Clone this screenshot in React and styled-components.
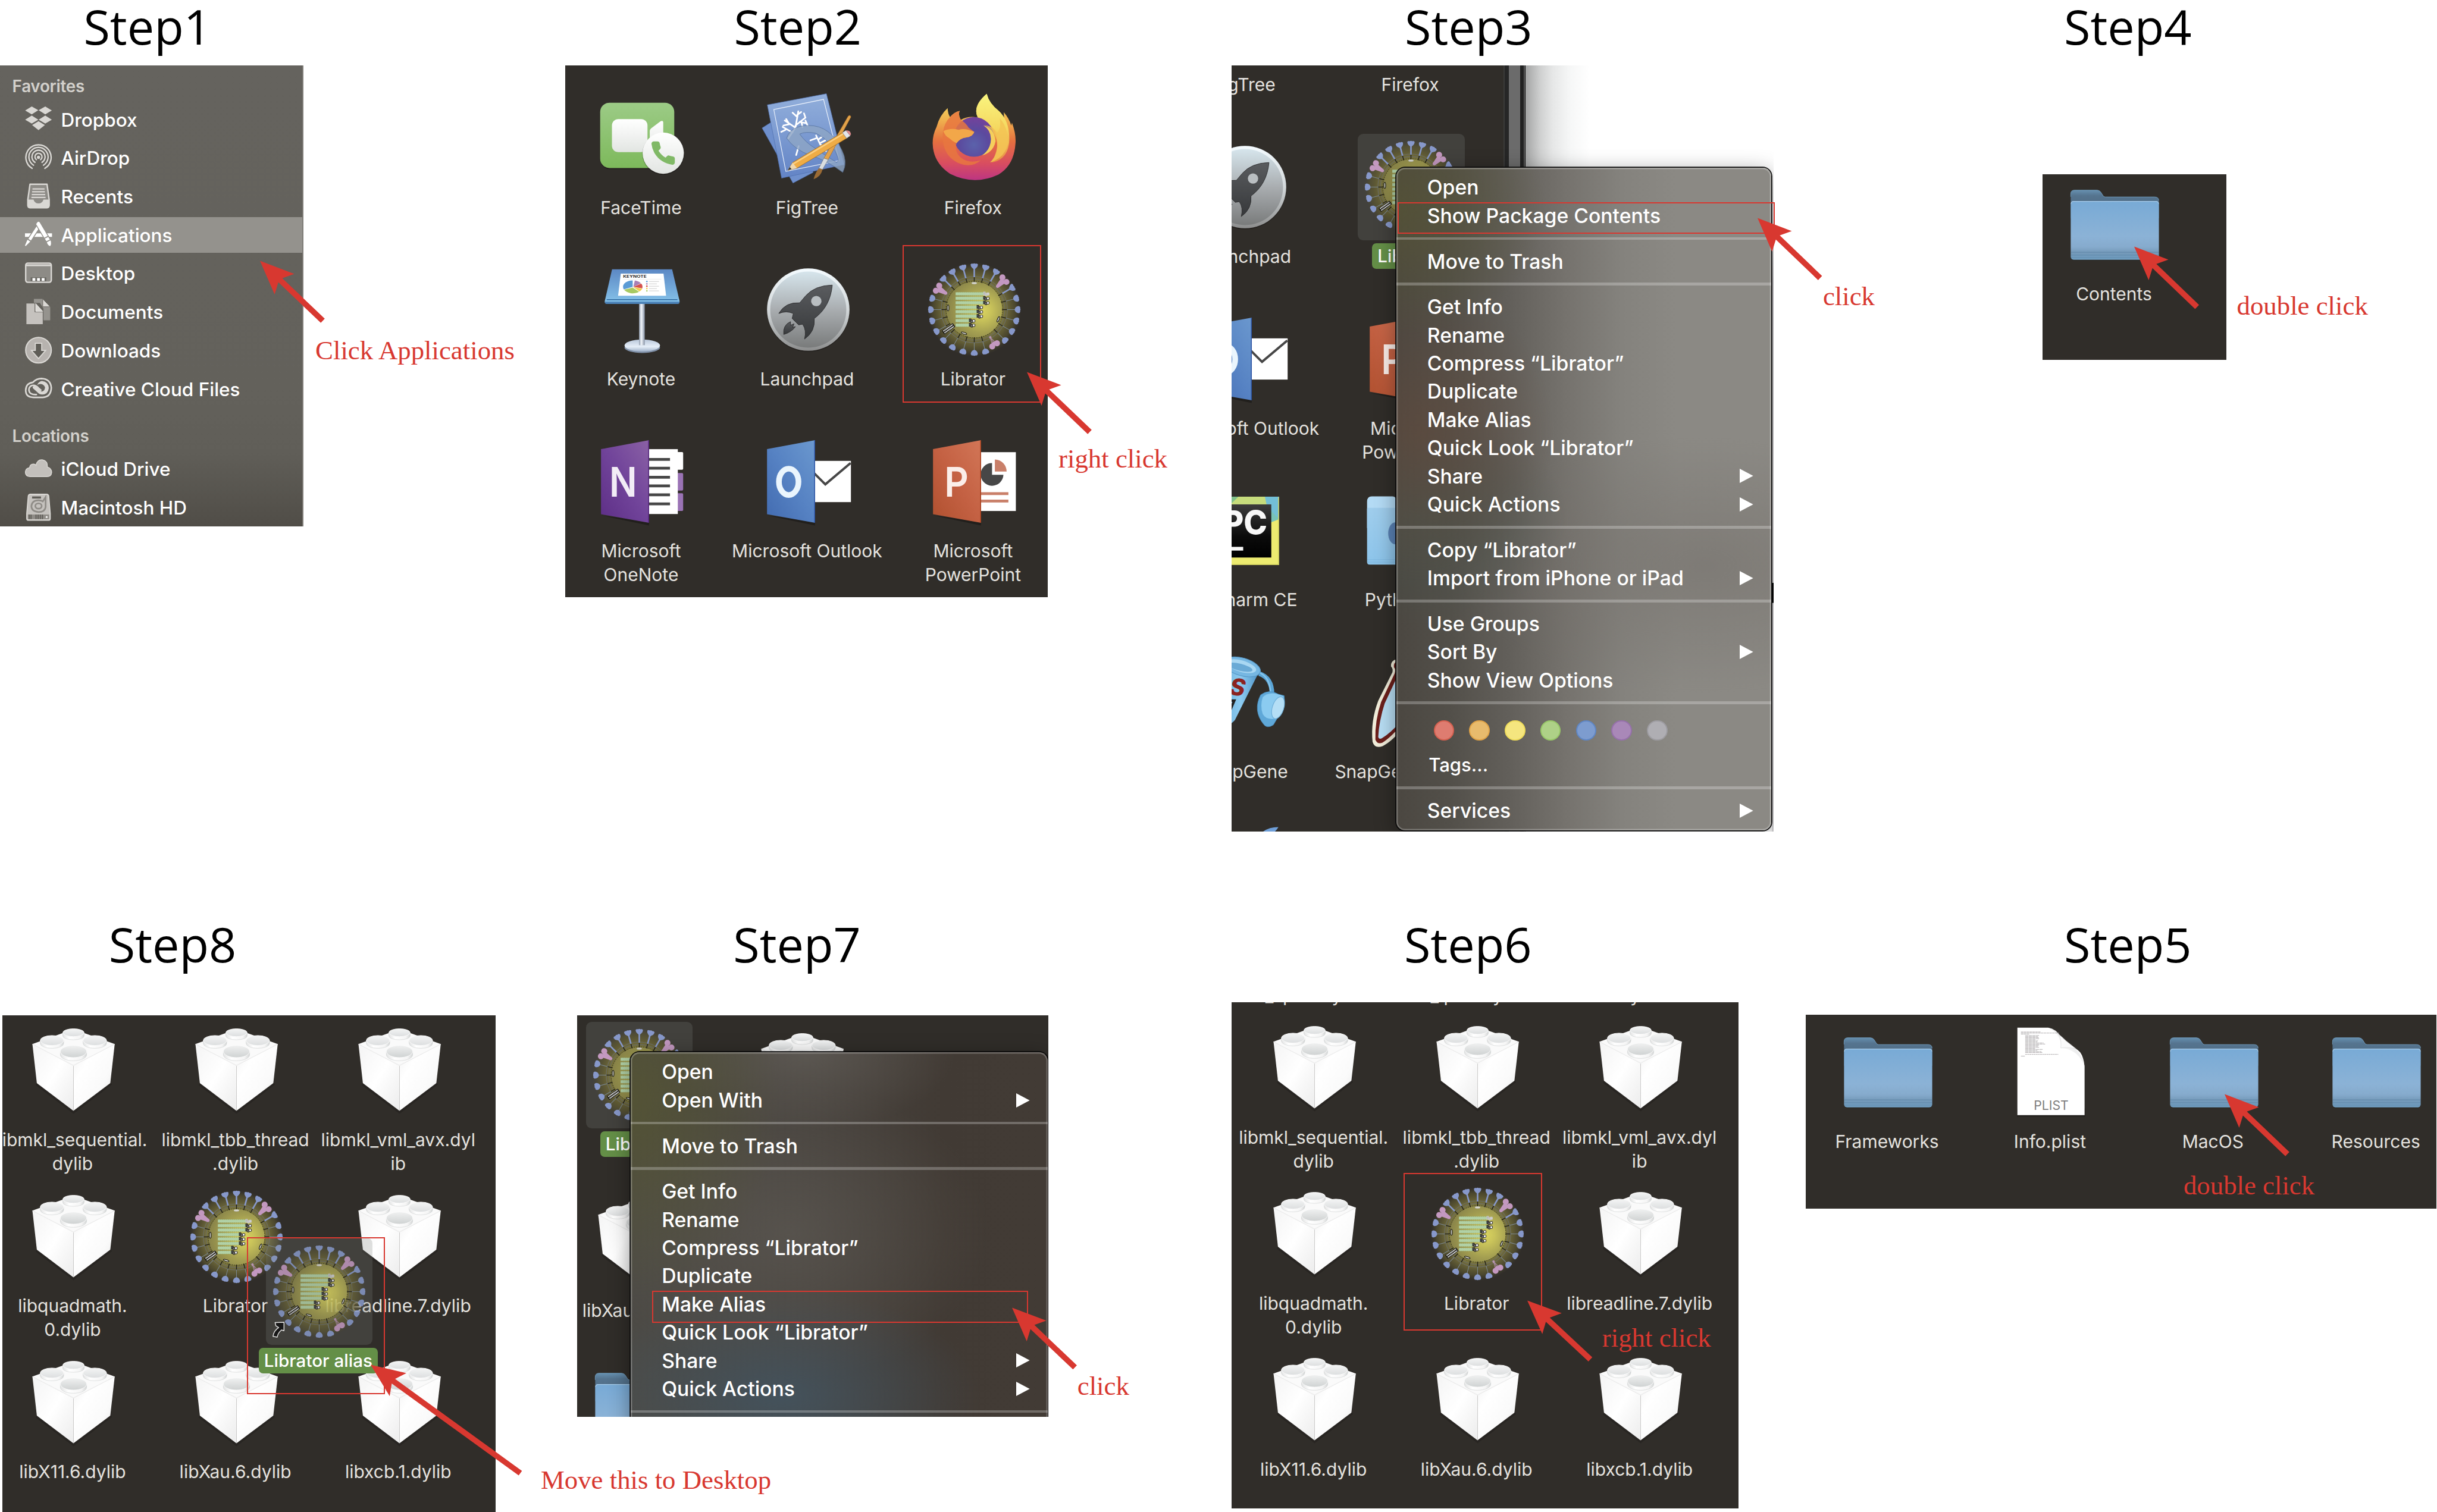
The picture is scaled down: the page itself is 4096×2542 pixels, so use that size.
import React from "react";
import styled, { createGlobalStyle, css } from "styled-components";

/* All measures are written in artboard units; u() turns them into CSS pixels. */
const SCALE = 4096 / 6854;
const u = (n) => `${(n * SCALE).toFixed(2)}px`;

const RED = "#d83830";
const SANS = `Inter, "Liberation Sans", sans-serif`;

const GlobalStyle = createGlobalStyle`
  * { box-sizing: border-box; }
  html, body { margin: 0; padding: 0; background: #fff; }
`;

/* ---------- page skeleton ---------- */

const Page = styled.main`
  position: relative;
  width: 4096px;
  height: 2542px;
  overflow: hidden;
  background: #fff;
  display: grid;
  grid-template-rows: ${u(2582)} 1fr;
`;

const StepRow = styled.section`
  display: grid;
  grid-template-columns: ${(p) => p.$cols.map(u).join(" ")} 1fr;
  align-items: start;
  min-height: 0;
`;

const StepColumn = styled.div`
  display: flex;
  flex-direction: column;
  align-items: flex-start;
  min-width: 0;
  padding-top: ${u(5)};
`;

const StepTitle = styled.h2`
  margin: 0 0 ${(p) => u(p.$gap)} ${(p) => u(p.$indent)};
  font: 400 ${u(135.5)} / 1 "Open Sans", "Noto Sans", sans-serif;
  color: #000;
  white-space: nowrap;
`;

const Panel = styled.div`
  position: relative;
  display: flex;
  align-items: flex-start;
  overflow: hidden;
  width: ${(p) => u(p.$w)};
  height: ${(p) => u(p.$h)};
  margin-left: ${(p) => u(p.$ml || 0)};
  background: #302d29;
`;

/* ---------- Finder sidebar ---------- */

const Sidebar = styled.nav`
  width: ${u(854)};
  height: ${u(1296)};
  padding-top: ${u(19.5)};
  border-right: ${u(4)} solid #7f7c77;
  background: linear-gradient(#65635e 0, #63615b 70%, #605e58 84%, #504d47 100%);
  font-family: ${SANS};
`;

const SidebarHeading = styled.div`
  height: ${u(79)};
  margin-top: ${(p) => u(p.$top)};
  padding-left: ${u(34.5)};
  line-height: ${u(79)};
  font-size: ${u(46.6)};
  font-weight: 600;
  letter-spacing: ${u(-0.5)};
  color: #d2d0cb;
`;

const SidebarRow = styled.div`
  height: ${u(108.3)};
  padding: ${u(3.4)} 0 ${u(5.4)};
`;

const SidebarItem = styled.div`
  display: flex;
  align-items: center;
  gap: ${u(25)};
  height: 100%;
  padding-left: ${u(70.5)};
  font-size: ${u(52.7)};
  font-weight: 500;
  color: #fff;
  white-space: nowrap;
  background: ${(p) => (p.$active ? "#94928d" : "transparent")};
  svg { width: ${u(76)}; height: ${u(76)}; flex: none; overflow: visible; }
`;

/* ---------- icon grid ---------- */

const IconGrid = styled.div`
  flex: none;
  display: grid;
  grid-template-columns: repeat(${(p) => p.$cols}, ${(p) => u(p.$cw)});
  grid-auto-rows: ${(p) => u(p.$rh)};
  margin: ${(p) => u(p.$y)} 0 0 ${(p) => u(p.$x)};
`;

const Cell = styled.div`
  display: flex;
  flex-direction: column;
  align-items: center;
  width: ${(p) => (p.$w ? u(p.$w) : "auto")};
`;

const IconFrame = styled.div`
  flex: none;
  width: ${u(300)};
  height: ${u(300)};
  margin: ${u(-22)} 0 ${u(-22)} ${u(6)};
  padding: ${u(22)};
  border-radius: ${u(16)};
  background: ${(p) => (p.$selected ? "rgba(125,130,125,.24)" : "transparent")};
  svg {
    display: block;
    width: 100%;
    height: 100%;
    overflow: visible;
    opacity: ${(p) => (p.$ghost ? 0.84 : 1)};
  }
`;

const Label = styled.div`
  margin-top: ${u(33)};
  font: 400 ${u(50.2)} / ${u(67)} ${SANS};
  color: #e4e2df;
  text-align: center;
  white-space: nowrap;
`;

const LabelLine = styled.div`
  height: ${u(67)};
  ${(p) =>
    p.$selected &&
    css`
      height: ${u(71)};
      line-height: ${u(71)};
      margin-top: ${u(-2)};
      padding: 0 ${u(15)};
      border-radius: ${u(12)};
      background: #648f47;
      color: #fff;
      font-weight: 500;
      font-size: ${u(49.6)};
    `}
`;

const DragItem = styled.div`
  position: absolute;
  left: ${u(660)};
  top: ${u(648)};
`;

/* ---------- context menu ---------- */

const Menu = styled.div`
  position: absolute;
  left: ${(p) => u(p.$x)};
  top: ${(p) => u(p.$y)};
  width: ${(p) => u(p.$w)};
  height: ${(p) => u(p.$h)};
  padding-top: ${u(16)};
  border-radius: ${u(24)};
  background: ${(p) => p.$bg};
  box-shadow: inset 0 0 0 ${u(4)} rgba(255, 255, 255, 0.24), 0 0 0 ${u(3)} #0b0b0b,
    0 ${u(14)} ${u(60)} rgba(0, 0, 0, 0.42);
  font: 500 ${u(56.4)} / ${u(79.35)} ${SANS};
  color: #fff;
  white-space: nowrap;
`;

const MenuItem = styled.div`
  display: flex;
  align-items: center;
  justify-content: space-between;
  height: ${u(79.35)};
  padding: 0 ${u(51)} 0 ${u(87)};
  svg { width: ${u(38)}; height: ${u(40)}; }
`;

const MenuRule = styled.div`
  height: ${u(8)};
  margin: ${u(20.5)} 0;
  background: rgba(255, 255, 255, 0.25);
`;

const TagDots = styled.div`
  display: flex;
  align-items: center;
  gap: ${u(42)};
  height: ${u(106)};
  padding-left: ${u(105)};
`;

const TagDot = styled.span`
  width: ${u(58)};
  height: ${u(58)};
  border-radius: 50%;
  border: ${u(4)} solid ${(p) => p.$edge};
  background: ${(p) => p.$fill};
`;

const TagsItem = styled.div`
  height: ${u(84.5)};
  padding: ${u(4)} 0 0 ${u(91)};
  line-height: ${u(80.5)};
  font-size: ${u(52)};
`;

/* ---------- step 3 window pieces ---------- */

const FinderArea = styled.div`
  flex: none;
  display: flex;
  align-items: flex-start;
  width: ${u(765)};
  height: 100%;
  overflow: hidden;
  background: #302d29;
`;

const WindowEdge = styled.div`
  flex: none;
  width: ${u(62)};
  height: 100%;
  background: linear-gradient(
    90deg,
    #3a3a39 0 5%, #262626 5% 23%, #6b6b6b 23% 77%, #222 77% 92%, #5c5c5c 92% 97%, #000 97%
  );
`;

const Backdrop = styled.div`
  flex: 1;
  height: 100%;
  background: linear-gradient(90deg, #a3a4a4 0, #cfd0d0 6%, #e6e7e7 11%, #f6f7f7 18%, #fff 26%);
`;

const RightSliver = styled.div`
  position: absolute;
  right: 0;
  top: ${u(400)};
  bottom: 0;
  width: ${u(6)};
  background: linear-gradient(
    rgba(215, 215, 215, 0) 0, #cfcdd1 12%, #dcdbdd 50%, #d9d8da 60.1%, #000 60.2% 63.3%, #dcdbdd 63.4%
  );
`;

/* ---------- annotations ---------- */

const Annotations = styled.div`
  position: absolute;
  inset: 0;
  pointer-events: none;
`;

const Callout = styled.span`
  position: absolute;
  left: ${(p) => u(p.$x)};
  top: ${(p) => u(p.$base - 62.8)};
  font: 400 ${u(75)} / 1 "Liberation Serif", "Times New Roman", serif;
  color: ${RED};
  white-space: nowrap;
`;

const Outline = styled.span`
  position: absolute;
  left: ${(p) => u(p.$x)};
  top: ${(p) => u(p.$y)};
  width: ${(p) => u(p.$w)};
  height: ${(p) => u(p.$h)};
  border: ${u(4.2)} solid ${RED};
`;

const ArrowSvg = styled.svg`
  position: absolute;
  left: ${(p) => u(p.$x)};
  top: ${(p) => u(p.$y)};
  width: ${(p) => u(p.$len)};
  height: ${u(82)};
  margin-top: ${u(-41)};
  transform-origin: 0 50%;
  transform: rotate(${(p) => p.$deg}deg);
`;

function Arrow({ tip, tail }) {
  const dx = tail[0] - tip[0];
  const dy = tail[1] - tip[1];
  const len = Math.hypot(dx, dy);
  const deg = (Math.atan2(dy, dx) * 180) / Math.PI;
  return (
    <ArrowSvg $x={tip[0]} $y={tip[1]} $len={len} $deg={deg.toFixed(2)} viewBox={`0 -41 ${len} 82`}>
      <path d={`M0 0 L95 40 L79 8 L${len} 8 L${len} -8 L79 -8 L95 -40 Z`} fill={RED} />
    </ArrowSvg>
  );
}

/* ---------- shared gradients ---------- */

const DefsSvg = styled.svg`
  position: absolute;
  width: 0;
  height: 0;
`;

const Lin = ({ id, stops, v = [0, 0, 0, 1] }) => (
  <linearGradient id={id} x1={v[0]} y1={v[1]} x2={v[2]} y2={v[3]}>
    {stops.map(([o, c]) => <stop key={o} offset={o} stopColor={c} />)}
  </linearGradient>
);

const Defs = () => (
  <DefsSvg aria-hidden="true">
    <defs>
      <radialGradient id="glow">
        <stop offset="0" stopColor="#8d8845" />
        <stop offset=".6" stopColor="#7d783f" />
        <stop offset=".74" stopColor="#625d36" />
        <stop offset=".88" stopColor="#5a5530" stopOpacity=".62" />
        <stop offset="1" stopColor="#4a4630" stopOpacity="0" />
      </radialGradient>
      <radialGradient id="core" cx=".64" cy=".52" r=".66">
        <stop offset="0" stopColor="#dad45f" />
        <stop offset=".25" stopColor="#c8c25a" />
        <stop offset=".6" stopColor="#a49f51" />
        <stop offset="1" stopColor="#858048" />
      </radialGradient>
      <Lin id="folder" stops={[[0, "#78aad6"], [0.6, "#8bb2d6"], [0.78, "#86abcd"], [0.88, "#7499b9"], [1, "#6f9dc0"]]} />
      <Lin id="folderBack" stops={[[0, "#6690b0"], [0.2, "#55748f"], [1, "#4b6479"]]} />
      <Lin id="brickL" v={[0, 0, 1, 1]} stops={[[0, "#f4f4f4"], [0.5, "#ffffff"], [1, "#ececec"]]} />
      <Lin id="brickR" v={[0, 0, 1, 1]} stops={[[0, "#f1f1f1"], [0.3, "#ffffff"], [0.65, "#fafafa"], [1, "#e4e4e4"]]} />
      <Lin id="stud" stops={[[0, "#f4f5f5"], [1, "#dcdedf"]]} />
      <Lin id="studFront" stops={[[0, "#f0f1f1"], [1, "#cfd2d2"]]} />
      <Lin id="studSide" v={[0, 0, 1, 0]} stops={[[0, "#e2e3e3"], [0.3, "#ffffff"], [0.8, "#f5f5f5"], [1, "#d4d6d6"]]} />
      <Lin id="ftGreen" stops={[[0, "#9ccb86"], [1, "#7db95b"]]} />
      <Lin id="ftWhite" stops={[[0, "#ffffff"], [1, "#e2e5e2"]]} />
      <Lin id="sheet" stops={[[0, "#92afdb"], [1, "#6384c6"]]} />
      <Lin id="lpRing" stops={[[0, "#f4fbff"], [0.5, "#d3d8da"], [1, "#8c8d8d"]]} />
      <Lin id="lpFace" stops={[[0, "#d6e5ec"], [0.5, "#a9adb0"], [1, "#797b7b"]]} />
      <Lin id="lpRocket" stops={[[0, "#5a5c5f"], [1, "#36383a"]]} />
      <Lin id="kn" stops={[[0, "#5c88c4"], [1, "#86c3ea"]]} />
      <Lin id="pole" v={[0, 0, 1, 0]} stops={[[0, "#8d99ab"], [0.4, "#f4f8fc"], [1, "#8591a3"]]} />
      <Lin id="base" stops={[[0, "#b9c7da"], [0.6, "#e6eff8"], [1, "#9fb0c8"]]} />
      <Lin id="one" v={[1, 0, 0, 1]} stops={[[0, "#8a61a5"], [0.5, "#71449a"], [1, "#5d2e86"]]} />
      <Lin id="out" v={[1, 0, 0, 1]} stops={[[0, "#6b98ce"], [0.5, "#5682c3"], [1, "#426bb0"]]} />
      <Lin id="ppt" v={[1, 0, 0, 1]} stops={[[0, "#d27657"], [0.5, "#c46143"], [1, "#b0502f"]]} />
      <Lin id="ffBody" stops={[[0, "#f6ea6b"], [0.3, "#f0b24e"], [0.55, "#e5703f"], [0.8, "#d94e5f"], [1, "#bd3582"]]} />
      <Lin id="ffFlame" stops={[[0, "#f9f57f"], [0.5, "#f5d860"], [1, "#e88a45"]]} />
      <radialGradient id="ffGlobe" cx=".5" cy=".7" r=".75">
        <stop offset="0" stopColor="#5b62ab" />
        <stop offset=".5" stopColor="#5b4a9e" />
        <stop offset="1" stopColor="#79409a" />
      </radialGradient>
      <Lin id="pcBlack" stops={[[0, "#3b3b3b"], [0.6, "#0b0b0b"], [1, "#000000"]]} />
      <Lin id="pyBox" stops={[[0, "#9fcdec"], [1, "#8cc4ea"]]} />
      <Lin id="tube" v={[0, 0, 1, 0]} stops={[[0, "#5fa3d2"], [0.6, "#8ccbf0"], [1, "#4f93c6"]]} />
      <Lin id="curl" v={[0, 1, 1, 0]} stops={[[0, "#ffffff"], [0.5, "#f3f3f3"], [1, "#cfd1d3"]]} />
    </defs>
  </DefsSvg>
);

/* ---------- Librator virus icon ---------- */

const range = (n) => Array.from({ length: n }, (_, i) => i);
const HA = [-45, -30, -15, 0, 15, 30, 60];
const NA = [75, 90, 105, 120, 135, 165, 180, 195, 210, 225, 240, 255, 270, 285];
const ANCHORS = [...HA, ...NA];
const STRANDS = [154, 154, 154, 135.7, 135.7, 135.7, 114, 114];

const LibratorIcon = ({ alias }) => (
  <svg viewBox="0 0 256 256">
    <circle cx="128" cy="128" r="132" fill="url(#glow)" />
    <g fill="none" stroke="#6c6d66" strokeWidth="1.8">
      <circle cx="128" cy="128" r="93" />
      <circle cx="128" cy="128" r="86" />
    </g>
    <circle cx="128" cy="128" r="79.5" fill="url(#core)" stroke="#2a2918" strokeWidth="1.4" strokeDasharray="4 2.4" />
    <g transform="translate(128 128)">
      {ANCHORS.map((a) => (
        <path key={a} d="M0 -93V-78" stroke="#1c1b14" strokeWidth="2.2" transform={`rotate(${a})`} />
      ))}
      {NA.map((a) => (
        <g key={a} transform={`rotate(${a})`}>
          <path d="M0 -115V-92" stroke="#7a8792" strokeWidth="1.8" />
          <path d="M-10 -125Q-10 -121 -7 -117Q-3 -113.500 0 -113.500Q3 -113.500 7 -117Q10 -121 10 -125Q8 -130.500 4 -129Q0 -131.500 -4 -129Q-8 -130.500 -10 -125Z" fill="#8798ca" />
        </g>
      ))}
      {HA.map((a) => (
        <path key={a} transform={`rotate(${a})`} fill="#8798ca"
          d="M-10.500 -127Q-7 -131 -4 -129Q0 -131.500 4 -129Q7 -131 10.500 -127Q10 -120 6 -117.500L2.200 -114V-91H-2.200V-114L-6 -117.500Q-10 -120 -10.500 -127Z" />
      ))}
      {[45, -60].map((a) => (
        <g key={a} transform={`rotate(${a})`} fill="#c398c0">
          <circle cx="-8" cy="-120" r="8.500" />
          <circle cx="9" cy="-119" r="8.500" />
          <path d="M-9 -115L-4 -90Q0 -86 4 -90L9 -114L0 -118Z" />
        </g>
      ))}
      <g transform="rotate(150)">
        <path d="M0 -90L-6 -112M0 -90V-112M0 -90L6 -112" stroke="#a98aa0" strokeWidth="1.8" />
        <circle cx="0" cy="-90" r="3.500" fill="#b995b0" />
        <circle cx="-8" cy="-114" r="8.500" fill="#c398c0" />
        <circle cx="8" cy="-115" r="8.500" fill="#c398c0" />
        <circle cx="0" cy="-111" r="6" fill="#c398c0" />
      </g>
    </g>
    {STRANDS.map((end, i) => {
      const y = 79 + i * 12.6;
      return (
        <g key={i}>
          <rect x="75.500" y={y} width={end - 74} height="9" fill="#b1d1a6" />
          <path d={`M76 ${y + 0.2}H${end}M76 ${y + 9}H${end}`} stroke="#8f9a58" strokeWidth=".9" strokeDasharray="3 2.600" />
          <g stroke={i ? "#1d1d1d" : "#c6c6c6"} strokeWidth="1.600">
            <rect x={end} y={y - 0.5} width="5" height="8" fill={i ? "#555" : "#b5b5b5"} />
            <circle cx={end + 7} cy={y + 6.5} r="4" fill={i ? "#6d6d6d" : "#c4c4c4"} />
            <rect x={end + 9} y={y + 1.5} width="7" height="7" rx="1.500" fill={i ? "#ececec" : "#d0d0d0"} />
          </g>
        </g>
      );
    })}
    <ellipse cx="128" cy="53.500" rx="7.500" ry="2.800" fill="#d8d8cf" stroke="#aaa" strokeWidth=".8" />
    <g stroke="#1d1d14" strokeWidth="2" fill="#c9c9c0">
      <ellipse cx="54.300" cy="123.300" rx="2.600" ry="8.500" />
      <ellipse cx="195.700" cy="155.500" rx="2.600" ry="8" transform="rotate(22 195.700 155.500)" />
      <ellipse cx="99" cy="194.500" rx="8" ry="2.600" transform="rotate(18 99 194.500)" />
    </g>
    <g transform="translate(55.700 182) rotate(-35)">
      <rect x="-19" y="-6.500" width="38" height="13" rx="2" fill="#22221c" />
      <path d="M-16 -3H16M-16 3H16" stroke="#e9e9e9" strokeWidth="3.200" strokeDasharray="3.500 .8" />
    </g>
    {alias && (
      <path d="M6 224L4 215L29 214L29 238L22 236Q12 244 10 256L-2 254Q0 238 14 229Z" fill="#111" stroke="#fff" strokeWidth="2.500" strokeLinejoin="round" />
    )}
  </svg>
);

/* ---------- other Finder icons ---------- */

const Stud = ({ cx, cy, rx, ry, h, top = "url(#stud)" }) => (
  <g>
    <path d={`M${cx - rx} ${cy}V${cy + h}A${rx} ${ry} 0 0 0 ${cx + rx} ${cy + h}V${cy}Z`} fill="url(#studSide)" stroke="#cdcfcf" strokeWidth="1" />
    <ellipse cx={cx} cy={cy} rx={rx} ry={ry} fill={top} stroke="#fbfbfb" strokeWidth="1.600" />
  </g>
);

const BrickIcon = () => (
  <svg viewBox="0 0 256 256">
    <path d="M22 170L128 250L236 168L228 150H30Z" fill="#000" opacity=".16" />
    <path d="M12.500 54L128 12L244 54L127.800 116Z" fill="#fafafa" />
    <path d="M12.500 54L127.800 115V242L25 164Z" fill="url(#brickL)" />
    <path d="M244 54L127.800 115V242L231.500 164Z" fill="url(#brickR)" />
    <path d="M12.500 54.500L127.800 114L244 54.500" fill="none" stroke="#ededed" strokeWidth="2" />
    <Stud cx={128} cy={22} rx={30} ry={11} h={9} />
    <Stud cx={67.500} cy={44} rx={33} ry={14} h={8} />
    <Stud cx={188} cy={44} rx={33} ry={14} h={8} />
    <Stud cx={128} cy={75} rx={37} ry={17} h={9} top="url(#studFront)" />
  </svg>
);

const FolderIcon = () => (
  <svg viewBox="0 0 256 256">
    <rect x="6" y="200" width="244" height="29" rx="6" fill="#000" opacity=".2" />
    <path d="M4 60V42Q4 31 15 31H78Q84 31 88 36L95 47Q97 50 101 50H240Q252 50 252 62V110H4Z" fill="url(#folderBack)" />
    <path d="M4 50V42Q4 31 15 31.500H78Q84 31.500 88 36L95 47Q97 50.500 101 50.500H240Q251 50.500 251.500 60" fill="none" stroke="#6d97b8" strokeWidth="1.600" />
    <rect x="4" y="62" width="248" height="165" rx="8" fill="url(#folder)" />
    <path d="M5 70Q5 63 12 63H244Q251 63 251 70" fill="none" stroke="#a8cdec" strokeWidth="1.800" />
    <path d="M5 206H251M5 214H251M5 221H251" stroke="#5f87a8" strokeWidth="1.800" opacity=".7" />
  </svg>
);

const PlistIcon = () => (
  <svg viewBox="0 0 256 256">
    <rect x="32" y="230" width="192" height="24" fill="#000" opacity=".22" />
    <path d="M33 3H120Q142 8 158 36Q180 60 196 62Q218 70 222 112V249H33Z" fill="#fff" />
    <path d="M120 3Q142 6 156 30L190 60Q214 72 222 112Q204 64 155 60Q158 22 120 3Z" fill="url(#curl)" />
    <path d="M155 60Q158 40 150 22Q160 30 170 40L200 64Q180 56 155 60Z" fill="#fafafa" stroke="#d8d9da" strokeWidth="1" />
    <g stroke="#a9a5a8" strokeWidth="1.500">
      <path d="M43 15H98M43 18H150M43 21H66" strokeDasharray="7 1" />
      {range(17).map((i) => (
        <path key={i} d={`M55 ${25 + i * 3}h${[40, 36, 38, 40, 30, 36, 34, 52, 56, 40, 36, 40, 28, 50, 34, 46, 48][i]}`} strokeDasharray="9 1" />
      ))}
      <path d="M55 78H148" strokeDasharray="5 1" />
      <path d="M43 83H54" />
    </g>
    <text x="128" y="234" textAnchor="middle" fontFamily={SANS} fontSize="35.500" fill="#7e7e7e">PLIST</text>
  </svg>
);

const FaceTimeIcon = () => (
  <svg viewBox="0 0 256 256">
    <rect x="10" y="32" width="208" height="183" rx="26" fill="#000" opacity=".25" />
    <rect x="9.600" y="28" width="208.400" height="183.500" rx="26" fill="url(#ftGreen)" />
    <rect x="42.700" y="74" width="100" height="93" rx="18" fill="url(#ftWhite)" />
    <path d="M149 108Q149 103 153 100L178 81Q187 76 187 84V160L153 140Q149 137 149 133Z" fill="url(#ftWhite)" />
    <circle cx="187" cy="172" r="59" fill="#000" opacity=".25" />
    <circle cx="187" cy="169.800" r="58" fill="url(#ftWhite)" />
    <g transform="translate(147 130) scale(3.300)">
      <path fill="#80b966" d="M22 16.920v3a2 2 0 0 1-2.180 2 19.790 19.790 0 0 1-8.630-3.070 19.500 19.500 0 0 1-6-6 19.790 19.790 0 0 1-3.070-8.670A2 2 0 0 1 4.110 2h3a2 2 0 0 1 2 1.720 12.840 12.840 0 0 0 .7 2.810 2 2 0 0 1-.45 2.110L8.090 9.910a16 16 0 0 0 6 6l1.270-1.270a2 2 0 0 1 2.110-.45 12.840 12.840 0 0 0 2.810.7A2 2 0 0 1 22 16.920z" />
    </g>
  </svg>
);

const FigTreeIcon = () => (
  <svg viewBox="0 0 256 256">
    <path d="M-2 99L60 60L142 224L85 254Z" fill="#6f90cd" stroke="#4e6eb0" strokeWidth="1" />
    <path d="M12.800 34L179 2.600L229 202L53 240Z" fill="url(#sheet)" stroke="#4f6fae" strokeWidth="1.200" />
    <path d="M31 47L171 18.500L215 191L65 221Z" fill="none" stroke="#e9f0fb" strokeWidth="2" />
    <g fill="none" stroke="#fff" strokeWidth="4.600" strokeLinecap="round">
      <path d="M94 175L101 150M72 128L92 98L100 52M92 98L62 78M76 88L58 92M72 84L66 74M84 112L56 96M92 92L120 70L116 58M104 82L124 86M108 80L112 96M97 68L84 56M97 62L108 54M64 104L52 110M120 78L126 92" />
      <path d="M150 120L162 146L184 154M150 128L134 134M160 142L176 134M168 149L178 164M156 132L166 124" />
    </g>
    <path fillRule="evenodd" d="M67 128Q78 92 130 92Q190 92 222 160Q240 195 225 224Q180 190 135 176Q92 162 67 128ZM104 116Q120 108 150 114Q198 138 212 184Q214 192 208 196Q178 178 150 158Q120 140 104 116Z" fill="#8ea6c6" opacity=".82" stroke="#54709a" strokeWidth="1.500" />
    <path d="M240 66Q246 60 248 68L184 188L172 184Z" fill="#e2a24a" stroke="#9b6420" strokeWidth="1" />
    <path d="M172 184L184 188L168 216L158 212Z" fill="#d9dde0" stroke="#6c7176" strokeWidth="1" />
    <path d="M158 212L168 216Q164 236 143 243Q148 224 158 212Z" fill="#9b6b34" />
    <path d="M71 218L84 196L224 112L236 128L96 212Z" fill="#efac45" stroke="#9c651b" strokeWidth="1.200" />
    <path d="M86 200L226 116" stroke="#fbd083" strokeWidth="4" />
    <path d="M71 218L84 196L96 212Z" fill="#efd7ae" />
    <path d="M71 218L76 209L81 214Z" fill="#333" />
    <path d="M224 112L234 106L246 121L236 128Z" fill="#e4e6ea" stroke="#8d9196" strokeWidth="1" />
    <path d="M234 106Q246 104 248 116L246 121Z" fill="#de8c90" />
  </svg>
);

const FirefoxIcon = () => (
  <svg viewBox="0 0 256 256">
    <path d="M53 43Q54 60 60 68Q72 54 87 51Q82 62 90 76Q108 66 128 68L138 70Q122 38 163 3Q170 30 196 50Q206 58 212 74L211 55Q226 72 232 92L234 84Q246 116 244 142Q240 204 196 230Q128 262 60 228Q12 196 11 142Q11 118 22 96Q30 64 53 43Z" fill="url(#ffBody)" />
    <path d="M163 3Q170 30 196 50Q230 80 226 140Q220 190 176 196Q204 150 186 108Q170 84 138 70Q122 38 163 3Z" fill="url(#ffFlame)" />
    <circle cx="127" cy="124" r="56" fill="url(#ffGlobe)" />
    <path d="M153 91Q176 92 190 130Q200 170 172 196Q214 184 224 140Q222 96 200 72Q204 104 192 112Q180 92 153 91Z" fill="#f3c455" opacity=".85" />
    <path d="M154 92Q174 104 175 130Q174 160 150 176Q182 168 188 136Q184 98 154 92Z" fill="#f5cf5c" />
    <path d="M60 68Q72 54 87 51Q82 62 90 76Q104 84 112 98L128 110Q124 124 104 126Q88 128 78 142Q72 166 90 182Q112 200 146 190Q120 214 80 196Q34 172 40 110Q44 84 60 68Z" fill="#e8773f" opacity=".85" />
    <path d="M41 108Q60 98 84 104Q96 100 112 104L128 110Q124 124 104 126Q88 128 78 142Q66 136 58 128Q46 122 41 108Z" fill="#f2a749" />
  </svg>
);

const KeynoteIcon = () => (
  <svg viewBox="0 0 256 256">
    <ellipse cx="128" cy="235" rx="50" ry="15" fill="#8191a8" />
    <ellipse cx="128" cy="229" rx="50" ry="17" fill="url(#base)" />
    <rect x="119" y="106" width="16" height="122" fill="url(#pole)" />
    <path d="M43 14.500H212L233 104Q233 111 228 111H27Q22 111 22.500 104Z" fill="url(#kn)" />
    <path d="M28 100H227" stroke="#2e6a9f" strokeWidth="2.500" />
    <path d="M23 106H233Q233 112 228 112H27Q22 112 23 106Z" fill="#4b82b8" />
    <path d="M67.500 26.700H187.800L195 89H60Z" fill="#fff" />
    <text x="74" y="38" fontFamily={SANS} fontSize="10.500" fontWeight="700" textLength="66" lengthAdjust="spacingAndGlyphs" fill="#333">KEYNOTE</text>
    <path d="M74 42.500H182" stroke="#ddd" strokeWidth="1" />
    <path d="M101 64V46A27 18 0 0 0 76 71Z" fill="#5b9bd5" />
    <path d="M103 64L107 46A27 18 0 0 1 124 54Z" fill="#a87fb5" />
    <path d="M103 64L125 55A27 18 0 0 1 128 68Z" fill="#d5504c" />
    <path d="M103 65L128 69A27 18 0 0 1 120 77Z" fill="#f1cf4d" />
    <path d="M101 66L119 78A27 18 0 0 1 77 72Z" fill="#a8c963" />
    {["#5b9bd5", "#a87fb5", "#d5504c", "#f1cf4d", "#a8c963"].map((c, i) => (
      <g key={c}>
        <circle cx="141" cy={49 + i * 6.600} r="2.200" fill={c} />
        <path d={`M147 ${49 + i * 6.600}h${i % 2 ? 22 : 28}`} stroke="#c9c9c9" strokeWidth="1.600" />
      </g>
    ))}
  </svg>
);

const LaunchpadIcon = () => (
  <svg viewBox="0 0 256 256">
    <circle cx="128" cy="131" r="116" fill="#000" opacity=".25" />
    <circle cx="128" cy="128" r="116" fill="url(#lpRing)" />
    <circle cx="128" cy="128" r="107" fill="url(#lpFace)" />
    <g fill="url(#lpRocket)" stroke="#2a2b2c" strokeWidth="1.500">
      <path d="M195.600 59Q146 60 120 90L104 109Q64 106 45 139Q66 130 86 139Q84 147 82.600 153L101 171L112 169Q124 186 117.500 211Q148 190 145 153Q190 120 195.600 59Z" />
      <path d="M78 162Q56 172 59 198Q80 192 92 176L84 178L88 168L78 172Z" />
    </g>
    <circle cx="150.600" cy="104" r="14.500" fill="#b9bec1" />
  </svg>
);

const OfficeDoor = ({ fill, edge }) => (
  <g>
    <path d="M14 224L147 252V240Z" fill="#000" opacity=".3" />
    <path d="M12 37L145 12Q147 11.500 147 14V242Q147 244.500 145 244L12 220Z" fill={fill} />
    <path d="M146 12V244" stroke={edge} strokeWidth="2.500" />
  </g>
);

const OneNoteIcon = () => (
  <svg viewBox="0 0 256 256">
    <path d="M220 45H240Q243 45 243 48V92Q243 95 240 95H220Z" fill="#fff" />
    <path d="M220 104H240Q243 104 243 107V150Q243 153.500 240 153.500H220Z" fill="#9a73b5" />
    <path d="M220 161H240Q243 161 243 164V208Q243 211 240 211H220Z" fill="#9a73b5" />
    <rect x="140" y="37" width="88" height="182.500" fill="#fff" />
    <path d="M146 66H206M146 90.500H206M146 116H206M146 140.500H206M146 165.500H206M146 191H206" stroke="#474747" strokeWidth="8" />
    <OfficeDoor fill="url(#one)" edge="#52247b" />
    <text x="74" y="171" textAnchor="middle" fontFamily={SANS} fontSize="116" fontWeight="600" textLength="78" lengthAdjust="spacingAndGlyphs" fill="#f2ecf6">N</text>
  </svg>
);

const OutlookIcon = () => (
  <svg viewBox="0 0 256 256">
    <rect x="140" y="70" width="108" height="116" fill="#fff" />
    <path d="M140 100L176 136L247 76" fill="none" stroke="#474747" strokeWidth="6.500" />
    <OfficeDoor fill="url(#out)" edge="#2f55a4" />
    <ellipse cx="73" cy="129" rx="27.500" ry="37" fill="none" stroke="#eaf5fd" strokeWidth="16" />
  </svg>
);

const PowerPointIcon = () => (
  <svg viewBox="0 0 256 256">
    <rect x="140" y="45.500" width="105" height="165.500" fill="#fff" />
    <path d="M178 108V76A32 32 0 1 0 210 109H178Z" fill="#474747" />
    <path d="M186 100V66A33 34 0 0 1 219 100Z" fill="#c97f69" />
    <path d="M146 162H224M146 183H224" stroke="#c97f69" strokeWidth="8" />
    <OfficeDoor fill="url(#ppt)" edge="#a6411f" />
    <text x="78" y="171" textAnchor="middle" fontFamily={SANS} fontSize="116" fontWeight="600" textLength="68" lengthAdjust="spacingAndGlyphs" fill="#fbeee9">P</text>
  </svg>
);

const PyCharmIcon = () => (
  <svg viewBox="0 0 256 256">
    <rect x="32" y="32" width="192" height="192" fill="#edeb70" />
    <path d="M32 32H110L60 90L32 120Z" fill="#7fc08a" />
    <path d="M110 32H186L200 60H80Z" fill="#c6dc7c" />
    <path d="M184 32H224V95L200 104L190 60Z" fill="#73bfd6" />
    <path d="M192 62L224 95L200 104Z" fill="#78c2b8" />
    <path d="M222.500 33V223H33" fill="none" stroke="#c9c95a" strokeWidth="2.500" />
    <rect x="54" y="53.500" width="148" height="149.500" fill="url(#pcBlack)" />
    <text x="66" y="138" fontFamily={SANS} fontSize="93" fontWeight="800" textLength="125" lengthAdjust="spacingAndGlyphs" fill="#f8f8f8">PC</text>
    <rect x="72" y="173" width="51" height="10.500" fill="#f8f8f8" />
  </svg>
);

const PythonIcon = () => (
  <svg viewBox="0 0 256 256">
    <path d="M4.500 46Q4.500 31 18 31H76Q86 31 88 44H240V120H4.500Z" fill="#b4dbf5" />
    <path d="M4.500 66Q4.500 63 8 63H252V216Q252 223 244 223H12Q4.500 223 4.500 216Z" fill="url(#pyBox)" />
    <path d="M5 209H250M5 216H250" stroke="#7db5dc" strokeWidth="1.500" />
    <ellipse cx="84" cy="135" rx="20" ry="31" fill="#5a82b4" />
  </svg>
);

const SnapGeneIcon = () => (
  <svg viewBox="0 0 256 256">
    <path d="M68 14L168 40L100 176Q80 200 60 186Q30 150 40 90Z" fill="url(#tube)" />
    <path d="M168 46Q204 58 204 104" fill="none" stroke="#5ba5d6" strokeWidth="13" />
    <path d="M166 42Q198 54 200 100" fill="none" stroke="#86c5ec" strokeWidth="4" />
    <ellipse cx="120" cy="27" rx="53" ry="25" transform="rotate(16 120 27)" fill="#76b7e2" stroke="#5698c8" strokeWidth="2" />
    <ellipse cx="118" cy="25" rx="43" ry="16" transform="rotate(16 118 25)" fill="#a9d7f2" />
    <ellipse cx="114" cy="28" rx="36" ry="10" transform="rotate(14 114 28)" fill="#6aaad6" />
    <path d="M172 106Q196 88 222 104L238 108Q244 140 222 166L208 190Q190 202 180 188Q150 150 172 106Z" fill="#5fa8d8" stroke="#4a8fc0" strokeWidth="1.500" />
    <path d="M178 112Q200 92 236 110Q240 150 216 172Q188 178 178 160Q170 136 178 112Z" fill="#8bcbf0" />
    <ellipse cx="221" cy="142" rx="16" ry="32" transform="rotate(18 221 142)" fill="#b4def5" stroke="#6fb0da" strokeWidth="2" />
    <text x="82" y="104" fontFamily={SANS} fontSize="66" fontWeight="800" fontStyle="italic" fill="#8b2320" transform="rotate(8 82 104)">S</text>
    <path d="M90 122H98L86 150" fill="none" stroke="#222" strokeWidth="7" />
  </svg>
);

const ViewerIcon = () => (
  <svg viewBox="0 0 256 256">
    <path d="M92 4Q70 8 72 26Q78 32 76 42L36 122Q14 180 20 238Q26 258 48 250Q70 240 100 206V4Z" fill="#f2eedb" />
    <path d="M92 10Q78 14 80 28Q86 34 82 46L44 126Q26 180 28 232Q34 246 48 240Q68 228 100 192V10Z" fill="#6c1f1b" />
    <path d="M96 40L54 130Q38 180 36 224Q38 232 46 228Q70 214 100 180V40Z" fill="#b9dff5" />
  </svg>
);

const FeatherIcon = () => (
  <svg viewBox="0 0 256 256">
    <path d="M170 16Q190 -4 222 -4Q214 12 190 22Z" fill="#6f9fd8" />
  </svg>
);

/* ---------- sidebar icons ---------- */

const IC = "#dad8d4";

const DropboxGlyph = () => (
  <svg viewBox="0 0 76 76" fill={IC}>
    <path d="M19 1.500L37.500 12L19 24L.5 13Z" />
    <path d="M57 1.500L75.500 13L57 24L38.500 12Z" />
    <path d="M19 27L37.500 39L19 50L.5 39Z" />
    <path d="M57 27L75.500 39L57 50L38.500 39Z" />
    <path d="M38 43L56 54L38 68L20 54Z" />
  </svg>
);

const AirDropGlyph = () => (
  <svg viewBox="0 0 76 76" fill="none" stroke={IC} strokeWidth="4" strokeLinecap="round">
    <path d="M20 67A35.500 35.500 0 1 1 56 67" />
    <path d="M24 58A27 27 0 1 1 52 58" />
    <path d="M28 50A18.500 18.500 0 1 1 48 50" />
    <path d="M32 42.500A10 10 0 1 1 44 42.500" />
    <circle cx="38" cy="36" r="4.500" fill={IC} stroke="none" />
  </svg>
);

const RecentsGlyph = () => (
  <svg viewBox="0 0 76 76">
    <path d="M14 3H62L68 46V62Q68 69 62 69H14Q8 69 8 62V46Z" fill="#8d8b86" stroke={IC} strokeWidth="4" strokeLinejoin="round" />
    <path d="M7 46H24Q27 57 38 57Q49 57 52 46H69V62Q69 69 62 69H14Q7 69 7 62Z" fill={IC} />
    <path d="M21 16H55M20 24H56M19 32H57M18 40H58" stroke={IC} strokeWidth="3.600" />
  </svg>
);

const ApplicationsGlyph = () => (
  <svg viewBox="0 0 76 76">
    <path d="M0 34H76V44H0Z" fill="#fff" />
    <g stroke="#94928d" strokeWidth="2.500" fill="#fff">
      <path d="M38 4L47 10L17 56L8 50Z" />
      <path d="M34 2Q38 -2 42 2L74 56Q76 70 70 71Q62 68 60 58L30 8Z" />
    </g>
    <path d="M7 52L15 57L2 70L0 68Z" fill="#fff" />
    <path d="M54 48L66 42M60 58L72 52" stroke="#94928d" strokeWidth="3" />
  </svg>
);

const DesktopGlyph = () => (
  <svg viewBox="0 0 76 76">
    <rect x="2" y="9" width="72" height="54" rx="6" fill="#8d8b86" stroke={IC} strokeWidth="4" />
    <path d="M3 15H73" stroke={IC} strokeWidth="5" />
    <path d="M16 49H60V60H16Z" fill="#6a6863" />
    <path d="M21 51H29V59H21ZM34 51H42V59H34ZM47 51H55V59H47Z" fill="#fff" />
  </svg>
);

const DocumentsGlyph = () => (
  <svg viewBox="0 0 76 76">
    <path d="M25 1H50L71 24V61H52V28L42 12H25Z" fill="#95938e" />
    <path d="M50 1L71 23H50Z" fill={IC} stroke="#63615b" strokeWidth="1.500" />
    <path d="M4 14H27V38H50V72H4Z" fill="#c5c2be" />
    <path d="M30 14L50 36H30Z" fill={IC} stroke="#f3f2ef" strokeWidth="1.500" />
  </svg>
);

const DownloadsGlyph = () => (
  <svg viewBox="0 0 76 76">
    <circle cx="38" cy="36.500" r="36" fill="#b7b3af" stroke={IC} strokeWidth="3.500" />
    <path d="M29 17H47V37H58L38 60L18 37H29Z" fill="#5f5d57" stroke={IC} strokeWidth="3" />
  </svg>
);

const CloudFilesGlyph = () => (
  <svg viewBox="0 0 76 76" fill="none" stroke={IC}>
    <path d="M24 62Q2 62 2 42Q3 22 22 20Q32 9 46 9Q72 10 74 35Q73 61 50 62Z" strokeWidth="4.500" />
    <path d="M48 16Q66 18 67 36Q65 54 48 54Q40 54 34 47L22 36Q20 33 24 30Q29 28 34 34L44 44Q49 48 54 42Q60 32 50 26Q42 22 34 27Q40 16 48 16Z" fill={IC} stroke="none" />
    <path d="M34 54Q12 56 11 41Q12 28 24 28Q31 28 37 35L46 43" strokeWidth="4.500" />
  </svg>
);

const ICloudGlyph = () => (
  <svg viewBox="0 0 76 76">
    <path d="M14 59Q1 58 1 46Q2 36 13 34Q14 25 22 24Q28 23 31 27Q35 10 50 12Q64 15 63 32Q75 36 75 47Q74 59 62 59Z" fill="#c3c0bc" stroke={IC} strokeWidth="2.500" />
  </svg>
);

const DiskGlyph = () => (
  <svg viewBox="0 0 76 76">
    <path d="M14 0H62Q67 1 67 8L71 54V68Q71 73 66 73H10Q5 73 5 68V54L9 8Q9 1 14 0Z" fill="#c5c2be" stroke={IC} strokeWidth="3" />
    <rect x="20" y="6" width="25" height="6" fill="#5f5d57" />
    <path d="M58 8V36Q56 50 38 50Q18 48 18 33Q20 17 38 17Q46 17 50 20Z" fill="none" stroke="#8f8c87" strokeWidth="4.500" />
    <ellipse cx="38" cy="33" rx="9" ry="7.500" fill="none" stroke="#8f8c87" strokeWidth="4.500" />
    <path d="M8 57H68V70H8Z" fill="#8f8c87" />
    <path d="M12 57V70M17 57V70M31 57V70M37 57V70M43 57V70M49 57V70" stroke="#5f5d57" strokeWidth="3" />
    <circle cx="61" cy="64" r="2.800" fill="#f3f2ef" />
  </svg>
);

/* ---------- composed parts ---------- */

const FAVORITES = [
  ["Dropbox", DropboxGlyph],
  ["AirDrop", AirDropGlyph],
  ["Recents", RecentsGlyph],
  ["Applications", ApplicationsGlyph, true],
  ["Desktop", DesktopGlyph],
  ["Documents", DocumentsGlyph],
  ["Downloads", DownloadsGlyph],
  ["Creative Cloud Files", CloudFilesGlyph],
];
const LOCATIONS = [
  ["iCloud Drive", ICloudGlyph],
  ["Macintosh HD", DiskGlyph],
];

const SidebarList = ({ items }) =>
  items.map(([name, Glyph, active]) => (
    <SidebarRow key={name}>
      <SidebarItem $active={active}>
        <Glyph />
        <span>{name}</span>
      </SidebarItem>
    </SidebarRow>
  ));

const File = ({ icon: Icon, lines, selected, alias, width }) => (
  <Cell $w={width}>
    <IconFrame $selected={selected} $ghost={alias}>{Icon && <Icon alias={alias} />}</IconFrame>
    <Label>
      {lines.map((l, i) => (
        <LabelLine key={i} $selected={selected}>{l}</LabelLine>
      ))}
    </Label>
  </Cell>
);

const Files = ({ items, ...grid }) => (
  <IconGrid {...grid}>
    {items.map(([Icon, lines, selected], i) => (
      <File key={i} icon={Icon} lines={lines} selected={selected} />
    ))}
  </IconGrid>
);

const Row = ({ children, sub }) => (
  <MenuItem>
    <span>{children}</span>
    {sub && (
      <svg viewBox="0 0 38 40"><path d="M0 0L38 20L0 40Z" fill="#fff" /></svg>
    )}
  </MenuItem>
);

const APPS = [
  [FaceTimeIcon, ["FaceTime"]],
  [FigTreeIcon, ["FigTree"]],
  [FirefoxIcon, ["Firefox"]],
  [KeynoteIcon, ["Keynote"]],
  [LaunchpadIcon, ["Launchpad"]],
  [LibratorIcon, ["Librator"]],
  [OneNoteIcon, ["Microsoft", "OneNote"]],
  [OutlookIcon, ["Microsoft Outlook"]],
  [PowerPointIcon, ["Microsoft", "PowerPoint"]],
];

const APPS_SCROLLED = [
  [null, ["FigTree"]],
  [null, ["Firefox"]],
  [LaunchpadIcon, ["Launchpad"]],
  [LibratorIcon, ["Librator"], true],
  [OutlookIcon, ["Microsoft Outlook"]],
  [PowerPointIcon, ["Microsoft", "PowerPoint"]],
  [PyCharmIcon, ["PyCharm CE"]],
  [PythonIcon, ["Python 3.8"]],
  [SnapGeneIcon, ["SnapGene"]],
  [ViewerIcon, ["SnapGene Viewer"]],
  [FeatherIcon, []],
];

const LIBS = [
  [BrickIcon, ["libmkl_sequential.", "dylib"]],
  [BrickIcon, ["libmkl_tbb_thread", ".dylib"]],
  [BrickIcon, ["libmkl_vml_avx.dyl", "ib"]],
  [BrickIcon, ["libquadmath.", "0.dylib"]],
  [LibratorIcon, ["Librator"]],
  [BrickIcon, ["libreadline.7.dylib"]],
  [BrickIcon, ["libX11.6.dylib"]],
  [BrickIcon, ["libXau.6.dylib"]],
  [BrickIcon, ["libxcb.1.dylib"]],
];

const LIBS_SCROLLED = [
  [null, ["", "_ilp64.dylib"]],
  [null, ["", "_lp64.dylib"]],
  [null, ["", "dylib"]],
  ...LIBS,
];

const LIBS_BEHIND_MENU = [
  [LibratorIcon, ["Librator"], true],
  [BrickIcon, []],
  [BrickIcon, ["libXau.6.dylib"]],
  [null, []],
  [FolderIcon, []],
];

const TAGS = [
  ["#de7c70", "#d4604f"],
  ["#e8bb6d", "#e0a347"],
  ["#f5e67f", "#efdc5a"],
  ["#aed187", "#98c868"],
  ["#7d9ccf", "#5f86c4"],
  ["#a988b8", "#9670ab"],
  ["#afaeb3", "#9d9ca1"],
];

const MENU_LIGHT = `
  radial-gradient(${u(420)} ${u(360)} at 0% 6%, rgba(86,84,52,.75), rgba(86,84,52,0)),
  radial-gradient(${u(380)} ${u(420)} at 6% 40%, rgba(98,74,60,.6), rgba(98,74,60,0)),
  radial-gradient(${u(420)} ${u(300)} at 6% 53%, rgba(74,82,74,.7), rgba(74,82,74,0)),
  radial-gradient(${u(700)} ${u(360)} at 82% 60%, rgba(110,105,100,.45), rgba(110,105,100,0)),
  linear-gradient(90deg, #4b4741 0, #524f49 14%, #625f5a 30%, #75726d 45%, #84827d 60%, #8b8984 75%, #8b8984 100%)`;

const MENU_DARK = `
  radial-gradient(${u(420)} ${u(560)} at 0% 12%, rgba(86,86,48,.75), rgba(86,86,48,0)),
  radial-gradient(${u(560)} ${u(300)} at 36% 88%, rgba(66,88,104,.7), rgba(66,88,104,0)),
  radial-gradient(${u(420)} ${u(220)} at 42% 0%, rgba(104,100,94,.6), rgba(104,100,94,0)),
  radial-gradient(${u(560)} ${u(420)} at 38% 46%, rgba(96,92,86,.6), rgba(96,92,86,0)),
  linear-gradient(90deg, #4c4a45 0, #47423d 45%, #413a34 75%, #423b35 100%)`;

export default function App() {
  return (
    <Page>
      <GlobalStyle />
      <Defs />

      <StepRow $cols={[1589, 1875, 2280]}>
        <StepColumn>
          <StepTitle $indent={235} $gap={44.3}>Step1</StepTitle>
          <Sidebar>
            <SidebarHeading $top={0}>Favorites</SidebarHeading>
            <SidebarList items={FAVORITES} />
            <SidebarHeading $top={38}>Locations</SidebarHeading>
            <SidebarList items={LOCATIONS} />
          </Sidebar>
        </StepColumn>

        <StepColumn>
          <StepTitle $indent={475} $gap={44.3}>Step2</StepTitle>
          <Panel $w={1357.5} $h={1496}>
            <Files $cols={3} $cw={466.8} $rh={483} $x={-19.4} $y={76} items={APPS} />
          </Panel>
        </StepColumn>

        <StepColumn>
          <StepTitle $indent={487} $gap={44.3}>Step3</StepTitle>
          <Panel $w={1525} $h={2154}>
            <FinderArea>
              <Files $cols={2} $cw={467} $rh={483.4} $x={-198.5} $y={-270} items={APPS_SCROLLED} />
            </FinderArea>
            <WindowEdge />
            <Backdrop />
            <RightSliver />
            <Menu $x={463} $y={287} $w={1055} $h={1865} $bg={MENU_LIGHT}>
              <Row>Open</Row>
              <Row>Show Package Contents</Row>
              <MenuRule />
              <Row>Move to Trash</Row>
              <MenuRule />
              <Row>Get Info</Row>
              <Row>Rename</Row>
              <Row>Compress “Librator”</Row>
              <Row>Duplicate</Row>
              <Row>Make Alias</Row>
              <Row>Quick Look “Librator”</Row>
              <Row sub>Share</Row>
              <Row sub>Quick Actions</Row>
              <MenuRule />
              <Row>Copy “Librator”</Row>
              <Row sub>Import from iPhone or iPad</Row>
              <MenuRule />
              <Row>Use Groups</Row>
              <Row sub>Sort By</Row>
              <Row>Show View Options</Row>
              <MenuRule />
              <TagDots>
                {TAGS.map(([fill, edge]) => <TagDot key={fill} $fill={fill} $edge={edge} />)}
              </TagDots>
              <TagsItem>Tags...</TagsItem>
              <MenuRule />
              <Row sub>Services</Row>
            </Menu>
          </Panel>
        </StepColumn>

        <StepColumn>
          <StepTitle $indent={61} $gap={350.5}>Step4</StepTitle>
          <Panel $w={517} $h={521}>
            <Files $cols={1} $cw={458} $rh={450} $x={-27.5} $y={13} items={[[FolderIcon, ["Contents"]]]} />
          </Panel>
        </StepColumn>
      </StepRow>

      <StepRow $cols={[1623, 1841, 1615]}>
        <StepColumn>
          <StepTitle $indent={306} $gap={134.5}>Step8</StepTitle>
          <Panel $w={1388} $h={1396} $ml={6}>
            <Files $cols={3} $cw={458} $rh={467} $x={-31} $y={27} items={LIBS} />
            <DragItem>
              <File icon={LibratorIcon} lines={["Librator alias"]} selected alias width={458} />
            </DragItem>
          </Panel>
        </StepColumn>

        <StepColumn>
          <StepTitle $indent={439} $gap={134.5}>Step7</StepTitle>
          <Panel $w={1325} $h={1129}>
            <Files $cols={2} $cw={459} $rh={467.5} $x={-57.5} $y={39.5} items={LIBS_BEHIND_MENU} />
            <Menu $x={151} $y={103} $w={1173} $h={1100} $bg={MENU_DARK}>
              <Row>Open</Row>
              <Row sub>Open With</Row>
              <MenuRule />
              <Row>Move to Trash</Row>
              <MenuRule />
              <Row>Get Info</Row>
              <Row>Rename</Row>
              <Row>Compress “Librator”</Row>
              <Row>Duplicate</Row>
              <Row>Make Alias</Row>
              <Row>Quick Look “Librator”</Row>
              <Row sub>Share</Row>
              <Row sub>Quick Actions</Row>
              <MenuRule />
            </Menu>
          </Panel>
        </StepColumn>

        <StepColumn>
          <StepTitle $indent={485} $gap={96.5}>Step6</StepTitle>
          <Panel $w={1425} $h={1425}>
            <Files $cols={3} $cw={458.5} $rh={467} $x={1} $y={-409.5} items={LIBS_SCROLLED} />
          </Panel>
        </StepColumn>

        <StepColumn>
          <StepTitle $indent={726} $gap={131.5}>Step5</StepTitle>
          <Panel $w={1774} $h={546}>
            <Files
              $cols={4} $cw={458.3} $rh={450} $x={-1} $y={34}
              items={[
                [FolderIcon, ["Frameworks"]],
                [PlistIcon, ["Info.plist"]],
                [FolderIcon, ["MacOS"]],
                [FolderIcon, ["Resources"]],
              ]}
            />
          </Panel>
        </StepColumn>
      </StepRow>

      <Annotations>
        <Arrow tip={[731, 733]} tail={[908, 902]} />
        <Callout $x={887} $base={1012}>Click Applications</Callout>

        <Outline $x={2539} $y={689} $w={390} $h={444} />
        <Arrow tip={[2888, 1046]} tail={[3065, 1215]} />
        <Callout $x={2977} $base={1316}>right click</Callout>

        <Outline $x={3931} $y={569} $w={1060} $h={89} />
        <Arrow tip={[4943, 614]} tail={[5119, 783]} />
        <Callout $x={5127} $base={860}>click</Callout>

        <Arrow tip={[6002, 694]} tail={[6179, 864]} />
        <Callout $x={6291} $base={886}>double click</Callout>

        <Arrow tip={[6256, 3078]} tail={[6433, 3247]} />
        <Callout $x={6141} $base={3361}>double click</Callout>

        <Outline $x={3947} $y={3300} $w={390} $h={444} />
        <Arrow tip={[4295, 3659]} tail={[4473, 3825]} />
        <Callout $x={4506} $base={3789}>right click</Callout>

        <Outline $x={1834} $y={3631} $w={1058} $h={90} />
        <Arrow tip={[2846, 3678]} tail={[3023, 3846]} />
        <Callout $x={3030} $base={3925}>click</Callout>

        <Outline $x={694} $y={3480} $w={389} $h={443} />
        <Arrow tip={[1043, 3839]} tail={[1464, 4144]} />
        <Callout $x={1521} $base={4189}>Move this to Desktop</Callout>
      </Annotations>
    </Page>
  );
}
